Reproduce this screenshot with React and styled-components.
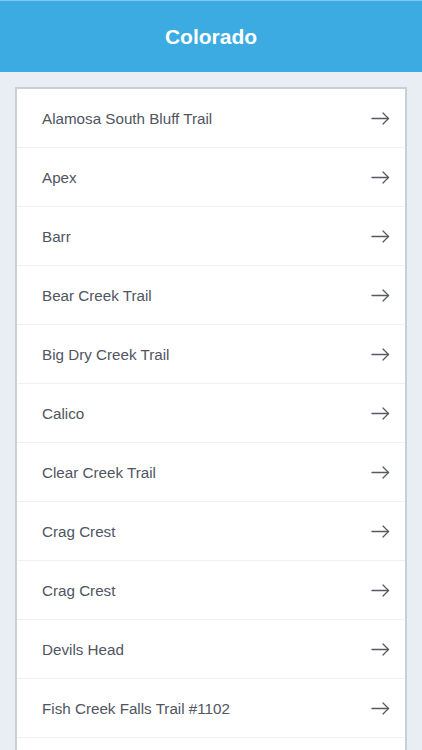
import React from 'react'
import styled, { createGlobalStyle } from 'styled-components'

const trails = [
  'Alamosa South Bluff Trail',
  'Apex',
  'Barr',
  'Bear Creek Trail',
  'Big Dry Creek Trail',
  'Calico',
  'Clear Creek Trail',
  'Crag Crest',
  'Crag Crest',
  'Devils Head',
  'Fish Creek Falls Trail #1102',
]

const GlobalStyle = createGlobalStyle`
  html, body {
    margin: 0;
    padding: 0;
    background: #e9eef5;
    font-family: "Liberation Sans", Arial, sans-serif;
  }
`

const Page = styled.div`
  width: 422px;
  height: 750px;
  overflow: hidden;
  background: #e9eef5;
  display: flex;
  flex-direction: column;
`

const Header = styled.header`
  flex: 0 0 72px;
  background: #3babe2;
  border-top: 1px solid #7cc8ee;
  box-sizing: border-box;
  display: flex;
  align-items: center;
  justify-content: center;
  color: #fff;
  font-size: 21px;
  font-weight: bold;
`

const Content = styled.main`
  flex: 1;
  display: flex;
  padding: 15px 15px 0 15px;
`

const Card = styled.ul`
  flex: 1;
  list-style: none;
  margin: 0;
  padding: 0;
  background: #fff;
  border: 2px solid #c9cfd8;
  border-bottom: none;
`

const Row = styled.li`
  height: 58px;
  display: flex;
  align-items: center;
  justify-content: space-between;
  padding: 0 15px 0 25px;
  border-bottom: 1px solid #eef0f3;
  color: #50555f;
  font-size: 15.2px;
`

const Arrow = () => (
  <svg width="19" height="13" viewBox="0 0 19 13" fill="none" stroke="#555a63" strokeWidth="1.3" strokeLinecap="round" strokeLinejoin="round">
    <line x1="1" y1="6.5" x2="17.5" y2="6.5" />
    <polyline points="12,1 17.5,6.5 12,12" />
  </svg>
)

export default function App() {
  return (
    <Page>
      <GlobalStyle />
      <Header>Colorado</Header>
      <Content>
        <Card>
          {trails.map((name, i) => (
            <Row key={i}>
              <span>{name}</span>
              <Arrow />
            </Row>
          ))}
        </Card>
      </Content>
    </Page>
  )
}
